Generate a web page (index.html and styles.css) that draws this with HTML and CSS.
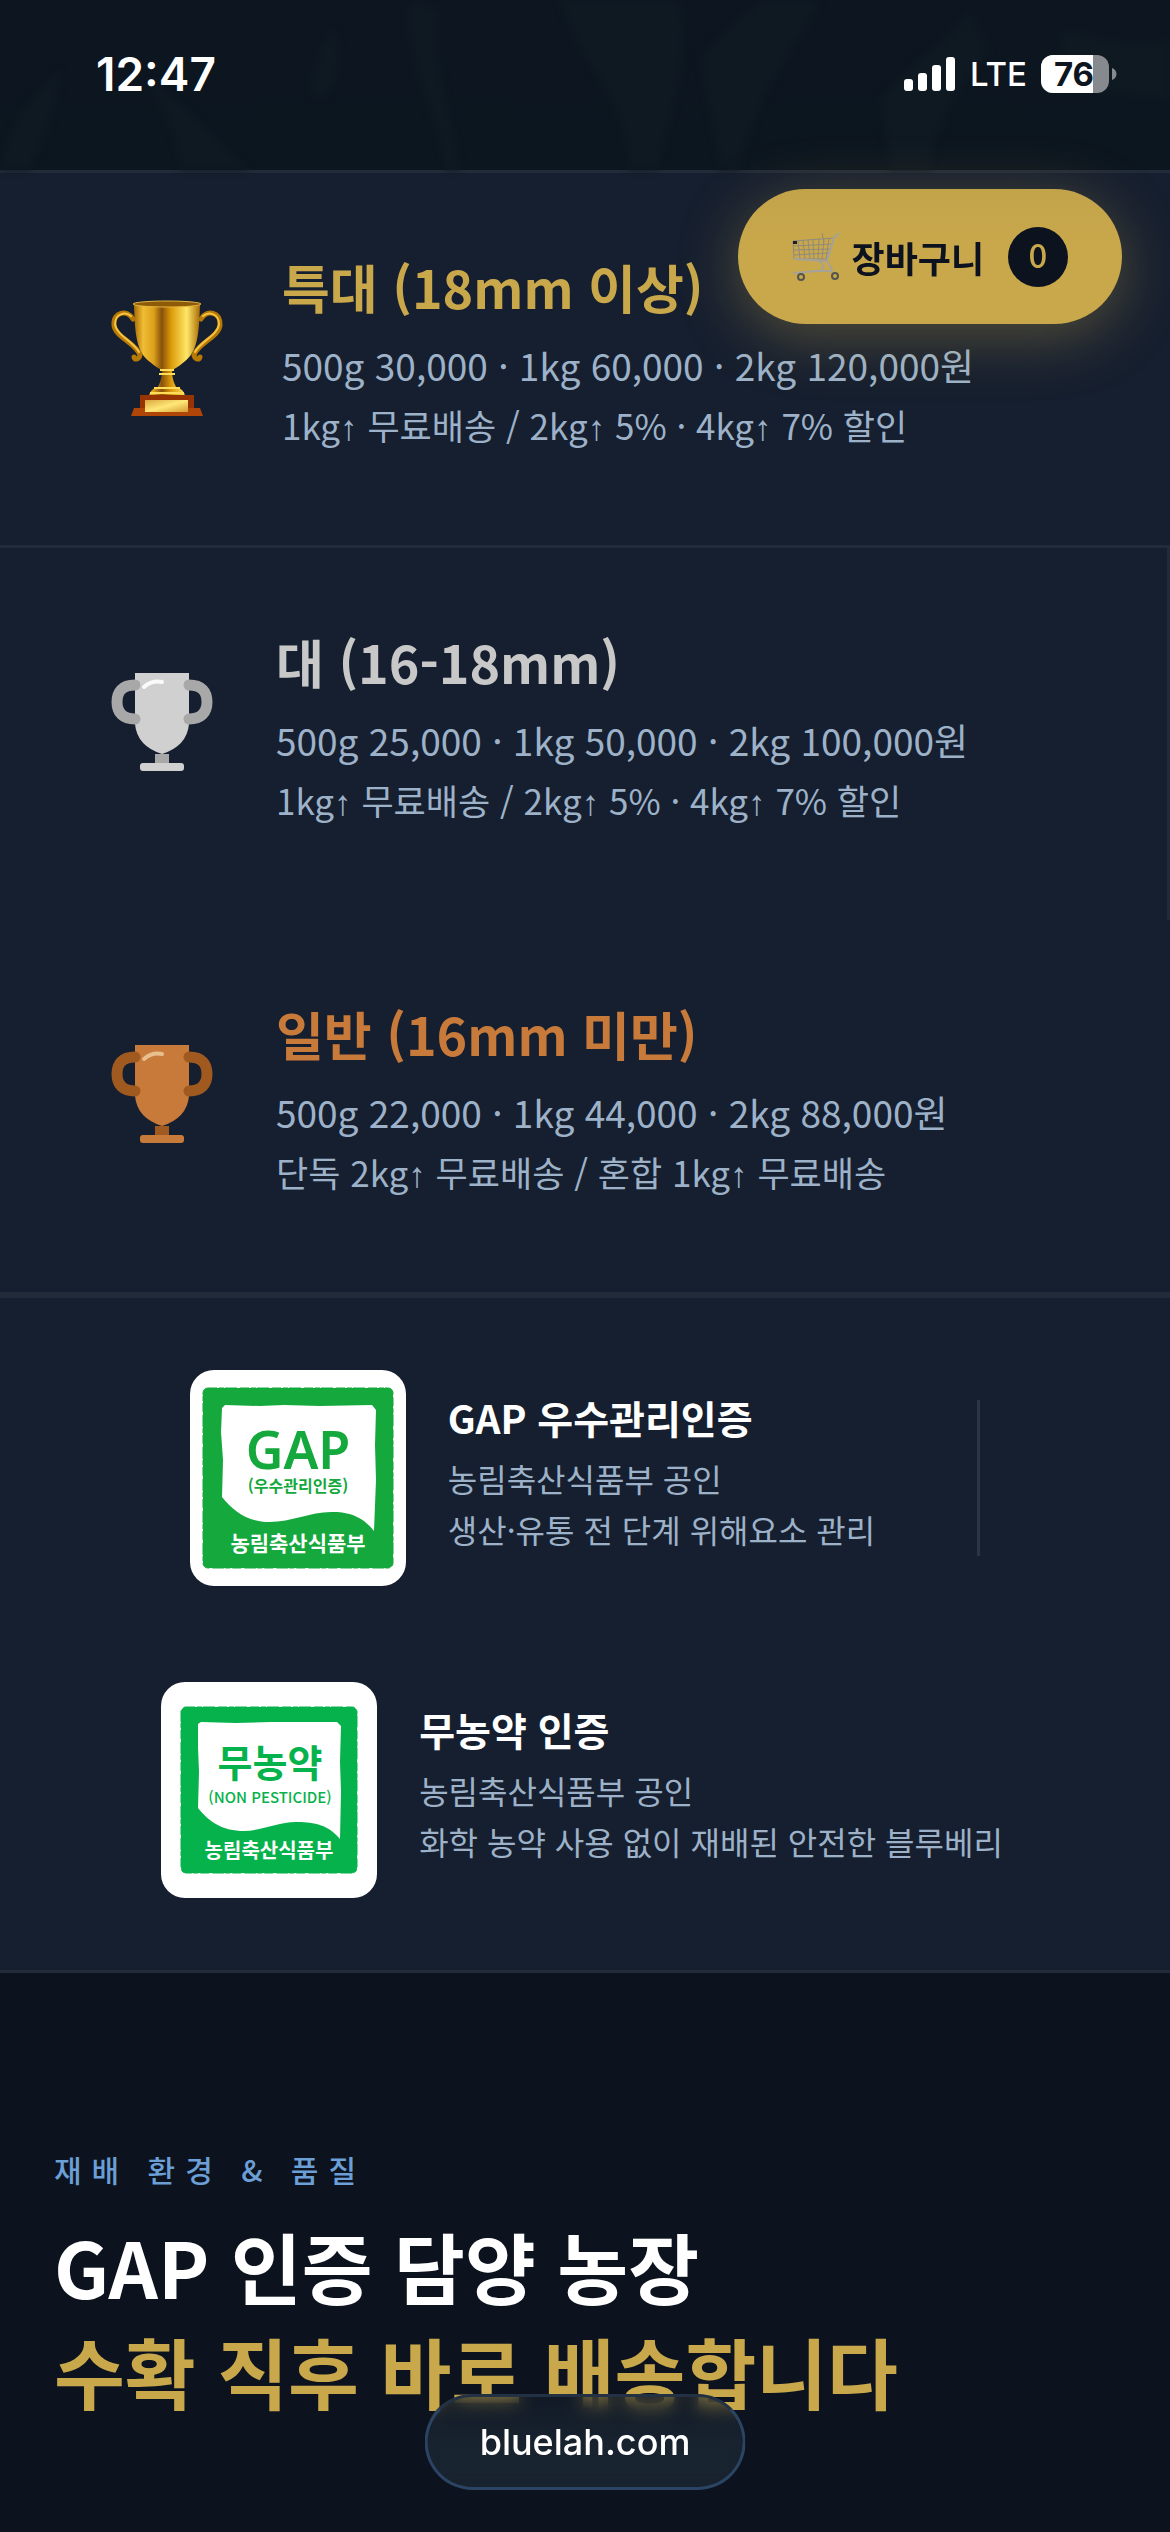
FILE: index.html
```html
<!DOCTYPE html>
<html lang="ko">

<head>
    <meta charset="UTF-8">
    <meta name="viewport" content="width=device-width, initial-scale=1.0">
    <title>bluelah.com</title>
    <link rel="stylesheet" href="styles.css">
</head>

<body>
    <!-- Hero, with the phone status bar over it -->
    <header class="hero">
        <svg class="hero-leaves" viewBox="0 0 1170 170" preserveAspectRatio="none" aria-hidden="true">
            <path d="M0 170C10 110 40 90 60 70C58 110 40 150 30 170ZM310 96C314 60 322 40 334 30C346 60 338 84 324 96ZM560 0h120c14 60-10 110-22 170h-30C630 100 580 70 560 0ZM700 60c20-30 40-40 60-60h60c-20 50-60 80-80 170h-20ZM880 100c30-40 60-50 90-90l20 40c-30 40-50 60-60 120h-40ZM1060 30c30 0 60 20 110 10v60c-40-10-80 0-110-20ZM410 0l30 10c-10 50 10 90 20 160h-14C436 110 400 60 410 0ZM150 80c30 20 60 50 100 90h-70c0-30-20-60-30-90Z" />
        </svg>
        <div class="status-bar">
            <span class="status-time">12:47</span>
            <div class="status-icons">
                <svg width="52" height="34" viewBox="0 0 52 34" fill="#fff" aria-hidden="true">
                    <rect x="0" y="22" width="9" height="12" rx="3" />
                    <rect x="14" y="16" width="9" height="18" rx="3" />
                    <rect x="28" y="8" width="9" height="26" rx="3" />
                    <rect x="42" y="0" width="9" height="34" rx="3" />
                </svg>
                <span class="status-network">LTE</span>
                <svg width="76" height="38" viewBox="0 0 76 38" aria-hidden="true">
                    <clipPath id="battery">
                        <rect width="68" height="38" rx="12" />
                    </clipPath>
                    <g clip-path="url(#battery)">
                        <rect width="68" height="38" fill="#868a8f" />
                        <rect width="52" height="38" fill="#fff" />
                    </g>
                    <path d="M71 13c6 2 6 10 0 12z" fill="#868a8f" />
                    <text class="battery-level" x="33" y="31" text-anchor="middle">76</text>
                </svg>
            </div>
        </div>
    </header>

    <button class="cart-button" type="button">
        <svg width="48" height="50" viewBox="0 0 48 50" fill="none" stroke="#8f8a7c" stroke-width="1" aria-hidden="true">
            <path d="M1 9L42 6M1 14L40 12M1 18L39 17M2 23L38 21M2 27L36 27M1 9l1 18M6 9l2 18M11 8l2 19M16 8l2 20M21 8l1 20M27 7l-1 21M32 7l-2 21M37 6l-3 22M30 1l2 9" />
            <path d="M47 1l-5 5-7 23L2 27" stroke="#a5a297" stroke-width="2" />
            <path d="M35 29c1 4 5 4 5 12M27 29c6 4 5 9-2 10L1 41M18 39h22" stroke="#a5a297" stroke-width="2" />
            <path d="M1 9h4v3H1z" fill="#1e1e1e" stroke="none" />
            <circle cx="9" cy="45" r="3" stroke="#55544f" stroke-width="2" />
            <circle cx="43" cy="44" r="3" stroke="#55544f" stroke-width="2" />
        </svg>
        <span>장바구니</span>
        <span class="cart-count">0</span>
    </button>

    <main>
        <section class="grades">
            <article class="grade grade-gold">
                <svg class="grade-icon" width="118" height="124" viewBox="0 0 118 124" aria-hidden="true">
                    <defs>
                        <linearGradient id="goldCup">
                            <stop offset="0" stop-color="#a86c05" />
                            <stop offset=".14" stop-color="#f0bd35" />
                            <stop offset=".3" stop-color="#dca01b" />
                            <stop offset=".42" stop-color="#87500a" />
                            <stop offset=".56" stop-color="#dc9908" />
                            <stop offset=".8" stop-color="#ffe766" />
                            <stop offset="1" stop-color="#a96b07" />
                        </linearGradient>
                        <linearGradient id="goldPlate" x2="1" y2="1">
                            <stop offset="0" stop-color="#dba63d" />
                            <stop offset=".5" stop-color="#ffe878" />
                            <stop offset="1" stop-color="#d59c35" />
                        </linearGradient>
                    </defs>
                    <g fill="none" stroke-linecap="round">
                        <path d="M25 22C19 12 5 15 6 28C7 40 28 46 32 58C31 63 26 63 26 60M93 22C99 12 113 15 112 28C111 40 90 46 86 58C87 63 92 63 92 60" stroke="#b77905" stroke-width="5" />
                        <path d="M23 19C17 14 7 17 7 27C8 38 26 45 31 55M95 19C101 14 111 17 111 27C110 38 92 45 87 55" stroke="#f6c444" stroke-width="2" />
                    </g>
                    <path d="M26 8C27 36 28 55 42 65Q49 71 54 73C54 83 51 87 50 90Q42 92 41 99H77Q76 92 68 90C67 87 64 83 64 73Q69 71 76 65C90 55 91 36 92 8Z" fill="url(#goldCup)" />
                    <ellipse cx="59" cy="7" rx="34" ry="3" fill="#8d5b08" stroke="#e6b641" stroke-width="1" />
                    <path d="M52 73H66M51 77H67M46 91H72M42 96H76" stroke="#ffdc5a" stroke-width="2" />
                    <path d="M32 98H86V113H32z" fill="#963404" />
                    <path d="M26 111H92L95 119H23z" fill="#b04508" />
                    <path d="M37 103H80V115H37z" fill="url(#goldPlate)" />
                </svg>
                <div class="grade-info">
                    <h2>특대 (18mm 이상)</h2>
                    <p class="price">500g 30,000 · 1kg 60,000 · 2kg 120,000원</p>
                    <p class="shipping">1kg<span class="arrow">↑</span> 무료배송 / 2kg<span class="arrow">↑</span> 5% · 4kg<span class="arrow">↑</span> 7% 할인</p>
                </div>
            </article>

            <article class="grade grade-silver">
                <svg class="grade-icon" width="108" height="150" viewBox="0 0 108 150" aria-hidden="true">
                    <path class="cup" d="M27 14H81V65Q79 87 54 95Q29 87 27 65Z" />
                    <path class="stem" d="M47 95H61V104H47Z" />
                    <rect class="cup" x="32" y="104" width="44" height="8" rx="3" />
                    <path class="handle" d="M27 26C14 26 9 33 9 43C9 54 15 60 27 60M81 26C94 26 99 33 99 43C99 54 93 60 81 60" />
                    <path class="shine" d="M36 28Q44 21 54 23" />
                </svg>
                <div class="grade-info">
                    <h2>대 (16-18mm)</h2>
                    <p class="price">500g 25,000 · 1kg 50,000 · 2kg 100,000원</p>
                    <p class="shipping">1kg<span class="arrow">↑</span> 무료배송 / 2kg<span class="arrow">↑</span> 5% · 4kg<span class="arrow">↑</span> 7% 할인</p>
                </div>
            </article>

            <article class="grade grade-bronze">
                <svg class="grade-icon" width="108" height="150" viewBox="0 0 108 150" aria-hidden="true">
                    <path class="cup" d="M27 14H81V65Q79 87 54 95Q29 87 27 65Z" />
                    <path class="stem" d="M47 95H61V104H47Z" />
                    <rect class="cup" x="32" y="104" width="44" height="8" rx="3" />
                    <path class="handle" d="M27 26C14 26 9 33 9 43C9 54 15 60 27 60M81 26C94 26 99 33 99 43C99 54 93 60 81 60" />
                    <path class="shine" d="M36 28Q44 21 54 23" />
                </svg>
                <div class="grade-info">
                    <h2>일반 (16mm 미만)</h2>
                    <p class="price">500g 22,000 · 1kg 44,000 · 2kg 88,000원</p>
                    <p class="shipping">단독 2kg<span class="arrow">↑</span> 무료배송 / 혼합 1kg<span class="arrow">↑</span> 무료배송</p>
                </div>
            </article>
        </section>

        <section class="certs">
            <div class="cert">
                <svg class="cert-mark mark-gap" viewBox="0 0 216 216" role="img" aria-label="GAP 우수관리인증">
                    <rect class="mark-frame" x="13" y="18" width="190" height="180" rx="5" />
                    <path class="mark-paper" d="M35 35L70 36L94 35L130 36L182 35L186 40L185 75L186 110L184 161C170 143 153 142 141 142C120 142 102 152 79 152C58 152 43 141 32 127L33 90L31 62L32 38Z" />
                    <text class="mark-gap-title" x="108" y="99">GAP</text>
                    <text class="mark-gap-sub" x="108" y="122">(우수관리인증)</text>
                    <text class="mark-agency" x="108" y="181">농림축산식품부</text>
                </svg>
                <div class="cert-info">
                    <h3>GAP 우수관리인증</h3>
                    <p>농림축산식품부 공인<br>생산·유통 전 단계 위해요소 관리</p>
                </div>
            </div>
            <div class="cert-divider"></div>
            <div class="cert">
                <svg class="cert-mark mark-organic" viewBox="0 0 216 216" role="img" aria-label="무농약 인증">
                    <rect class="mark-frame" x="20" y="25" width="176" height="166" rx="5" />
                    <path class="mark-paper" d="M40 40L75 41L110 40L176 40L180 44L179 80L180 110L179 157C166 141 149 140 135 140C117 140 100 149 83 149C62 149 48 140 37 126L38 90L37 65L37 42Z" />
                    <text class="mark-organic-title" x="109" y="95">무농약</text>
                    <text class="mark-organic-sub" x="109" y="121">(NON PESTICIDE)</text>
                    <text class="mark-agency" x="108" y="176">농림축산식품부</text>
                </svg>
                <div class="cert-info">
                    <h3>무농약 인증</h3>
                    <p>농림축산식품부 공인<br>화학 농약 사용 없이 재배된 안전한 블루베리</p>
                </div>
            </div>
        </section>

        <section class="farm">
            <p class="eyebrow">재배 환경 &amp; 품질</p>
            <h1>GAP 인증 담양 농장<br><em>수확 직후 바로 배송합니다</em></h1>
        </section>
    </main>

    <a class="address-pill" href="#">bluelah.com</a>
</body>

</html>
```
FILE: styles.css
```css
:root {
    --bg-dark: #0c131f;
    --bg-navy: #161f2f;
    --line: #222b39;
    --gold: #c9a84c;
    --silver: #c8c8c8;
    --bronze: #c87a3a;
    --muted: #9db2c8;
    --blue: #6b9fd6;
}

* {
    box-sizing: border-box;
}

body {
    margin: 0;
    min-height: 100vh;
    display: flex;
    flex-direction: column;
    background: var(--bg-dark);
    color: #fff;
    font-family: "Noto Sans CJK KR", sans-serif;
}

h1,
h2,
h3,
p {
    margin: 0;
}

main {
    flex: 1;
    display: flex;
    flex-direction: column;
}

/* Hero and status bar */
.hero {
    position: relative;
    height: 170px;
    background: linear-gradient(#0d1620, #0c161f);
}

.hero-leaves {
    position: absolute;
    inset: 0;
    width: 100%;
    height: 100%;
    fill: #0f1922;
    filter: blur(3px);
}

.status-bar {
    position: relative;
    height: 148px;
    padding: 0 53px 0 96px;
    display: flex;
    align-items: center;
    justify-content: space-between;
    font-family: Inter, sans-serif;
}

.status-time {
    font-size: 46px;
    font-weight: 600;
}

.status-icons {
    display: flex;
    align-items: center;
    gap: 14px;
}

.status-network {
    font-size: 33px;
    font-weight: 500;
}

.battery-level {
    fill: #0d1620;
    font-size: 33px;
    font-weight: 700;
}

/* Floating cart */
.cart-button {
    position: fixed;
    top: 189px;
    right: 48px;
    height: 135px;
    padding: 0 54px;
    display: flex;
    align-items: center;
    gap: 12px;
    border: 0;
    border-radius: 68px;
    background: linear-gradient(#c3a34a, var(--gold) 40%);
    box-shadow: 0 12px 60px rgba(201, 168, 76, 0.35);
    color: var(--bg-dark);
    font-family: inherit;
    font-size: 36px;
    font-weight: 700;
}

.cart-count {
    width: 60px;
    height: 60px;
    margin-left: 12px;
    border-radius: 50%;
    background: var(--bg-dark);
    color: var(--gold);
    font-size: 33px;
    font-weight: 500;
    line-height: 54px;
    text-align: center;
}

/* Price by grade */
.grades {
    border-top: 3px solid var(--line);
    border-bottom: 3px solid var(--line);
    background: var(--bg-navy);
}

.grade {
    height: 372px;
    padding: 0 108px;
    display: flex;
    align-items: center;
}

.grade-gold {
    height: 375px;
    border-bottom: 3px solid var(--line);
}

.grade-silver {
    border-right: 3px solid var(--line);
}

.grade-icon {
    flex: none;
    margin-right: 60px;
}

.grade-gold .grade-icon {
    margin-right: 56px;
}

.grade-info {
    padding-bottom: 16px;
}

.grade h2 {
    margin-bottom: 6px;
    font-size: 52px;
    font-weight: 700;
    line-height: 84px;
}

.grade p {
    color: var(--muted);
    line-height: 60px;
    white-space: nowrap;
}

.grade .price {
    font-size: 37px;
}

.grade .shipping {
    font-size: 35px;
}

.arrow {
    font-family: "Liberation Sans", sans-serif;
}

.grade-gold h2 {
    color: var(--gold);
}

.grade-silver h2 {
    color: var(--silver);
}

.grade-bronze h2 {
    color: var(--bronze);
}

.handle {
    fill: none;
    stroke-width: 11px;
    stroke-linecap: round;
}

.shine {
    fill: none;
    stroke-width: 4px;
    stroke-linecap: round;
}

.grade-silver .cup {
    fill: #d0d0d0;
}

.grade-silver .stem {
    fill: #a8a8a8;
}

.grade-silver .handle {
    stroke: #a8a8a8;
}

.grade-silver .shine {
    stroke: #fafafa;
}

.grade-bronze .cup {
    fill: var(--bronze);
}

.grade-bronze .stem {
    fill: #a05a20;
}

.grade-bronze .handle {
    stroke: #a05a20;
}

.grade-bronze .shine {
    stroke: #e8bf8f;
}

/* Certifications */
.certs {
    padding: 72px 48px;
    display: flex;
    flex-wrap: wrap;
    align-items: center;
    justify-content: center;
    gap: 96px;
    border-top: 3px solid var(--line);
    border-bottom: 3px solid var(--line);
    background: var(--bg-navy);
}

.cert {
    display: flex;
    align-items: center;
    gap: 42px;
}

.cert-mark {
    width: 216px;
    height: 216px;
    border-radius: 24px;
    background: #fff;
    text-anchor: middle;
}

.cert-info {
    padding: 0 6px 14px 0;
}

.cert-info h3 {
    margin-bottom: 6px;
    font-size: 39px;
    font-weight: 700;
    line-height: 60px;
}

.cert-info p {
    color: var(--muted);
    font-size: 32px;
    line-height: 51px;
    white-space: nowrap;
}

.cert-divider {
    width: 3px;
    height: 156px;
    background: #2b3443;
}

.mark-gap {
    --mark: #15a83c;
}

.mark-organic {
    --mark: #06b24b;
}

.mark-frame {
    fill: var(--mark);
    stroke: var(--mark);
    stroke-width: 1px;
    stroke-dasharray: 9 2 5 1 12 3;
}

.mark-paper {
    fill: #fff;
}

.cert-mark text {
    fill: var(--mark);
    font-weight: 700;
}

.cert-mark .mark-gap-title {
    font-family: "Noto Sans", sans-serif;
    font-size: 52px;
    font-weight: 600;
}

.mark-gap-sub {
    font-size: 16px;
}

.mark-organic-title {
    font-size: 38px;
}

.cert-mark .mark-organic-sub {
    font-size: 15px;
    font-weight: 500;
}

.cert-mark .mark-agency {
    fill: #fff;
    font-size: 21px;
}

.cert-mark.mark-organic .mark-agency {
    font-size: 20px;
}

/* Farm intro */
.farm {
    flex: 1;
    padding: 166px 54px 60px;
}

.eyebrow {
    margin-bottom: 14px;
    color: var(--blue);
    font-size: 30px;
    font-weight: 500;
    line-height: 60px;
    letter-spacing: 10px;
}

.farm h1 {
    font-size: 77px;
    font-weight: 700;
    line-height: 105px;
}

.farm em {
    color: var(--gold);
    font-style: normal;
}

/* Browser address pill */
.address-pill {
    position: fixed;
    bottom: 42px;
    left: 50%;
    transform: translateX(-50%);
    padding: 0 52px;
    border: 3px solid #2b4463;
    border-top-color: #233145;
    border-radius: 48px;
    background: linear-gradient(rgba(25, 36, 48, 0.4), rgba(25, 36, 48, 0.95) 50%);
    backdrop-filter: blur(9px);
    color: #fff;
    font-family: Inter, sans-serif;
    font-size: 36px;
    font-weight: 500;
    line-height: 90px;
    text-decoration: none;
}
```
